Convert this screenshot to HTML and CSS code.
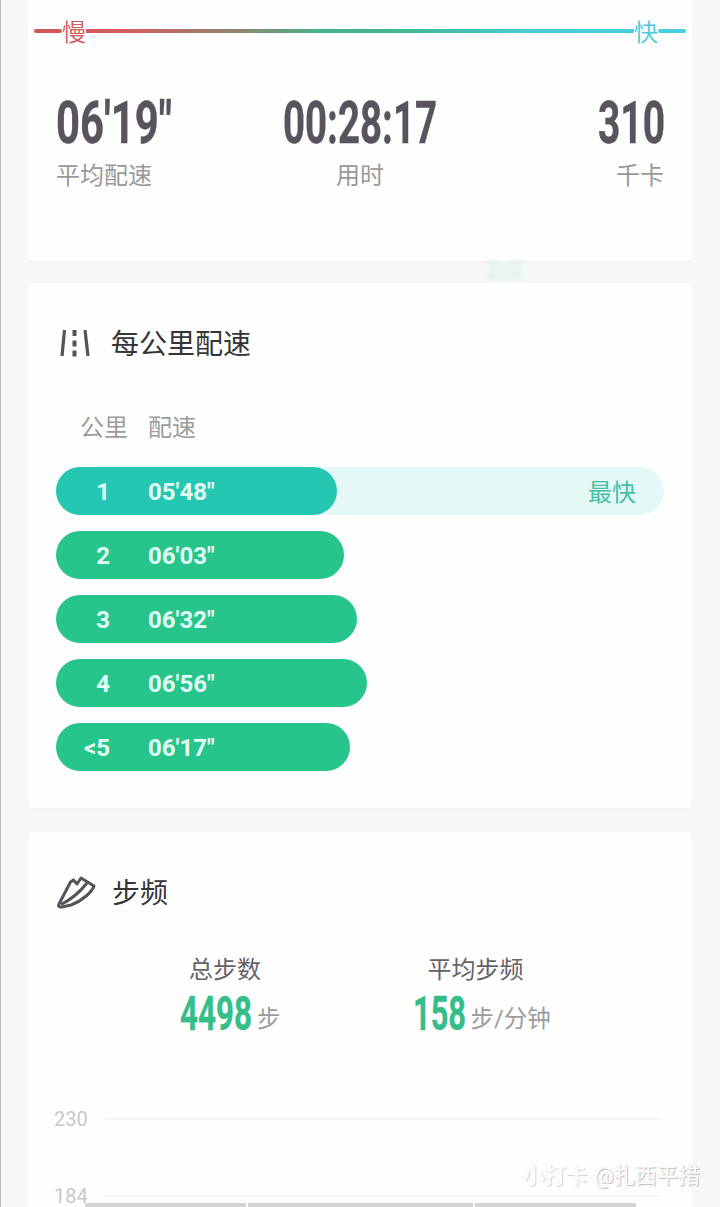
FILE: index.html
```html
<!DOCTYPE html>
<html lang="zh-CN">
<head>
<meta charset="utf-8">
<title>跑步记录</title>
<link rel="stylesheet" href="styles.css">
</head>
<body>
<main class="page">
  <section class="card summary">
    <div class="scale">
      <span class="tick slow-line"></span><span class="slow">慢</span><span class="gradient"></span><span class="fast">快</span><span class="tick fast-line"></span>
    </div>
    <div class="stats">
      <div class="stat left">
        <svg class="num" width="120" height="50"><text x="0" y="46" textLength="116" lengthAdjust="spacingAndGlyphs">06'19"</text></svg>
        <span class="label">平均配速</span>
      </div>
      <div class="stat mid">
        <svg class="num" width="156" height="50"><text x="1" y="46" textLength="154" lengthAdjust="spacingAndGlyphs">00:28:17</text></svg>
        <span class="label">用时</span>
      </div>
      <div class="stat right">
        <svg class="num" width="68" height="50"><text x="2" y="46" textLength="67" lengthAdjust="spacingAndGlyphs">310</text></svg>
        <span class="label">千卡</span>
      </div>
    </div>
    <svg class="leaf" width="42" height="26" viewBox="0 0 42 26"><path d="M1 2h13l7 3 6-3h14l-4 11 3 5-5 5H7l-4-5 3-6z"/></svg>
  </section>

  <section class="card pace">
    <h2 class="title">
      <svg class="icon" width="38" height="32" viewBox="0 0 38 32"><path d="M8.500 3 6 29M29 3l3 26" /><path d="M18.500 3v6m0 4.500v6m0 4v6" stroke-width="4"/></svg>
      <span>每公里配速</span>
    </h2>
    <div class="head"><span class="km">公里</span><span>配速</span></div>
    <div class="rows">
      <div class="track best"><div class="bar" style="width:281px"><span class="km">1</span><span>05'48"</span></div><span class="tag">最快</span></div>
      <div class="track"><div class="bar" style="width:288px"><span class="km">2</span><span>06'03"</span></div></div>
      <div class="track"><div class="bar" style="width:301px"><span class="km">3</span><span>06'32"</span></div></div>
      <div class="track"><div class="bar" style="width:311px"><span class="km">4</span><span>06'56"</span></div></div>
      <div class="track"><div class="bar" style="width:294px"><span class="km">&lt;5</span><span>06'17"</span></div></div>
    </div>
  </section>

  <section class="card cadence">
    <h2 class="title">
      <svg class="icon shoe" width="40" height="34" viewBox="0 0 40 34"><path d="M3 29 14.500 7l3-2 3.500 4 4-6 13 8C36 17 26 26 15 30L6 32C3 32.500 2 31 3 29z"/><path d="M5 29.500C14 25 24 17 31 8"/></svg>
      <span>步频</span>
    </h2>
    <div class="totals">
      <div class="total steps">
        <span class="name">总步数</span>
        <div class="value"><svg class="num small" width="73" height="40"><text x="0" y="37" textLength="72" lengthAdjust="spacingAndGlyphs">4498</text></svg><span class="unit">步</span></div>
      </div>
      <div class="total rate">
        <span class="name">平均步频</span>
        <div class="value"><svg class="num small" width="54" height="40"><text x="0" y="37" textLength="53" lengthAdjust="spacingAndGlyphs">158</text></svg><span class="unit">步/分钟</span></div>
      </div>
    </div>
    <div class="chart">
      <div class="grid"><span>230</span><i></i></div>
      <div class="grid"><span>184</span><i></i></div>
      <div class="segments"><i></i><i class="wide"></i><i></i></div>
    </div>
  </section>
  <div class="mark"><b>小打卡</b><span>@扎西平措</span></div>
</main>
</body>
</html>
```
FILE: styles.css
```css
* { box-sizing: border-box; }
body {
  margin: 0;
  background: #f7f7f7;
  font-family: Roboto, "Noto Sans CJK SC", sans-serif;
  font-weight: 350;
}
.page {
  position: relative;
  height: 1207px;
  overflow: hidden;
  padding: 0 28px;
  border-left: 1px solid #b9b9b9;
  padding-left: 27px;
  display: flex;
  flex-direction: column;
}
.card {
  flex: none;
  position: relative;
  background: #fefefe;
  border-radius: 5px;
  box-shadow: 0 1px 3px rgba(0, 0, 0, .04);
}
.summary { height: 261px; margin-bottom: 22px; border-radius: 0 0 5px 5px; padding-top: 13px; }
.scale { display: flex; align-items: center; height: 36px; padding: 0 6px; font-size: 24px; line-height: 36px; }
.scale span { flex: none; }
.tick { width: 28px; height: 4px; border-radius: 2px; }
.slow-line { background: #d4585b; }
.fast-line { background: #48cfdf; }
.scale .gradient { flex: 1; height: 4px; background: linear-gradient(90deg, #d4585b 0%, #cf5f5f 10%, #9a816d 25%, #45b287 43%, #43b89a 60%, #48ccd4 82%, #48cfdf 100%); }
.slow { color: #cf5b60; }
.fast { color: #48c9d8; }
.slow, .fast { width: 24px; height: 36px; line-height: 40px; }

.stats { display: grid; grid-template-columns: 1fr 1fr 1fr; padding: 48px 28px 0; }
.stat { display: flex; flex-direction: column; }
.mid { align-items: center; }
.right { align-items: flex-end; }
.num { display: block; overflow: visible; font-family: Roboto, sans-serif; font-weight: 700; font-size: 60px; fill: #59535d; stroke: #59535d; stroke-width: .4px; }
.label { font-size: 24px; line-height: 36px; margin-top: 11px; font-weight: 400; color: #999; }
.leaf { position: absolute; left: 456px; top: 258px; fill: #e9f4f0; filter: blur(1px); }

.pace { height: 525px; margin-bottom: 24px; padding: 39px 28px 0; }
.title { display: flex; align-items: center; gap: 17px; height: 40px; margin: 0; font-size: 28px; font-weight: 400; line-height: 40px; color: #353535; }
.title span { padding-top: 5px; }
.icon { flex: none; fill: none; stroke: #55525a; stroke-width: 3.2px; }
.pace .icon { margin-top: 2px; }
.shoe { stroke-linejoin: round; stroke-width: 3px; margin-top: 1px; }
.head { display: flex; gap: 20px; margin-top: 48px; padding-left: 24px; font-size: 24px; line-height: 36px; font-weight: 400; color: #9c9c9c; }
.rows { display: flex; flex-direction: column; gap: 16px; margin-top: 21px; }
.track { display: flex; justify-content: space-between; align-items: center; height: 48px; border-radius: 24px; }
.best { background: #e5f8f5; }
.bar { display: flex; align-items: center; gap: 38px; height: 48px; padding-top: 1px; border-radius: 24px; background: #27c58b; color: #e2fff5; font-size: 24px; font-weight: 700; }
.best .bar { background: #25c7b2; }
.bar .km { width: 54px; text-align: right; }
.tag { margin: -2px 28px 0 0; font-size: 24px; font-weight: 400; color: #45bfa8; }

.cadence { height: 420px; padding: 39px 28px 0; }
.cadence .title { gap: 16px; }
.totals { display: flex; padding-left: 124px; gap: 132px; margin-top: 41px; }
.total { display: flex; flex-direction: column; }
.name { font-size: 24px; line-height: 36px; font-weight: 400; color: #65626a; }
.steps .name { padding-left: 9px; }
.rate .name { padding-left: 15px; }
.value { display: flex; gap: 3px; margin-top: 5px; }
.small { font-size: 48.500px; fill: #35be89; stroke: #35be89; }
.unit { font-size: 23.500px; line-height: 36px; padding: 8px 0 0 1px; font-weight: 400; color: #9c9c9c; }
.chart { margin: 70px 0 0 -2px; }
.grid { display: flex; align-items: center; height: 24px; margin-bottom: 53px; font-size: 20px; color: #c8c8c8; font-weight: 400; }
.grid span { width: 51px; }
.grid i { width: 555px; height: 2px; background: #f5f5f5; }
.segments { display: flex; gap: 2px; margin: -58px 0 0 31px; }
.segments i { width: 161px; height: 5px; background: #d4d4d4; }
.segments .wide { width: 225px; }
.mark { position: absolute; left: 522px; top: 1158px; display: flex; gap: 7px; font-size: 21.500px; line-height: 36px; white-space: nowrap; font-weight: 400; color: #fff; text-shadow: 1px 1px 1px #bbb, 0 0 1px #d5d5d5; }
.mark b { font-weight: 700; text-shadow: 1px 1px 1px #d2d2d2, 0 0 1px #e5e5e5; }
```
